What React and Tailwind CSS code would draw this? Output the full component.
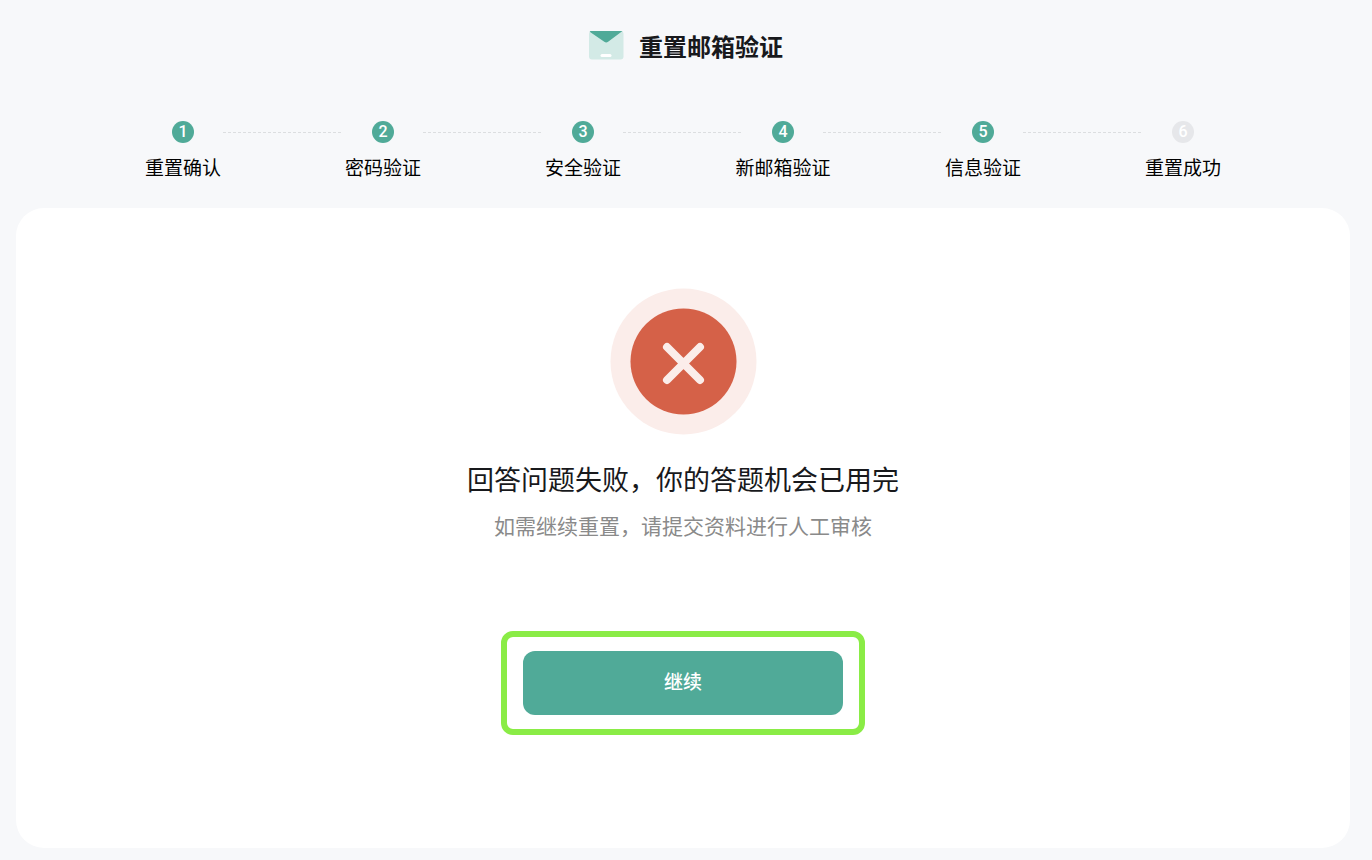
import React, { Fragment } from 'react'
import clsx from 'clsx'

const steps = ['重置确认', '密码验证', '安全验证', '新邮箱验证', '信息验证', '重置成功']
const currentStep = 5

function MailLogo() {
  return (
    <svg width="36" height="32" viewBox="0 0 36 32" aria-hidden="true">
      <rect x="0" y="1" width="34.5" height="28.5" rx="3" fill="#d3eae6" />
      <path d="M1.5 1H33.5L19.1 11.8a3.2 3.2 0 0 1-3.8 0L0.7 1.7Z" fill="#50aa98" />
      <rect x="11.5" y="24" width="11" height="3" rx="1.5" fill="#fff" />
    </svg>
  )
}

function FailIcon() {
  return (
    <svg width="147" height="147" viewBox="0 0 147 147" aria-hidden="true">
      <circle cx="73.5" cy="73.5" r="73" fill="#fbedea" />
      <circle cx="73.5" cy="73.5" r="53" fill="#d56148" />
      <path d="M57 59L90 92M90 59L57 92" stroke="#fbedea" strokeWidth="8" strokeLinecap="round" />
    </svg>
  )
}

function Steps() {
  return (
    <ol className="flex w-full max-w-[1080px] mx-auto">
      {steps.map((label, index) => (
        <Fragment key={label}>
          {index > 0 && (
            <li aria-hidden="true" className="flex-1 h-[22px] flex items-center">
              <svg width="100%" height="1">
                <line x1="0" y1="0.5" x2="100%" y2="0.5" stroke="#dcdee0" strokeDasharray="3 2" />
              </svg>
            </li>
          )}
          <li className="w-20 flex flex-col items-center">
            <span
              className={clsx(
                "size-[22px] rounded-full flex items-center justify-center font-['Roboto',sans-serif] text-base leading-5 font-medium text-white",
                index < currentStep ? 'bg-[#50aa98]' : 'bg-[#e6e7ea]'
              )}
            >
              {index + 1}
            </span>
            <span className="mt-2 text-[19px] leading-8 text-black whitespace-nowrap">{label}</span>
          </li>
        </Fragment>
      ))}
    </ol>
  )
}

export default function App() {
  return (
    <div className="min-h-screen flex flex-col bg-[#f7f8fa] pt-7 pb-3 font-['Noto_Sans_CJK_SC',sans-serif]">
      {/* Header */}
      <header className="flex items-center justify-center gap-[14px]">
        <MailLogo />
        <h1 className="text-2xl leading-9 font-bold text-[#18191c]">重置邮箱验证</h1>
      </header>

      <div className="mt-[57px] flex-1 flex flex-col pl-4 pr-[22px]">
        <Steps />

        {/* Result */}
        <main className="mt-[25px] flex-1 flex flex-col items-center rounded-[28px] bg-white pt-20 pb-20">
          <FailIcon />
          <h2 className="mt-6 text-[27px] leading-10 text-[#18191c]">回答问题失败，你的答题机会已用完</h2>
          <p className="mt-2 text-[21px] leading-9 text-[#8a8a8a]">如需继续重置，请提交资料进行人工审核</p>
          <div className="mt-22 rounded-xl border-6 border-[#8aec46] px-4 py-[14px]">
            <button type="button" className="block w-80 h-16 rounded-xl bg-[#50aa98] pb-1 text-[19px] font-medium text-white">
              继续
            </button>
          </div>
        </main>
      </div>
    </div>
  )
}
